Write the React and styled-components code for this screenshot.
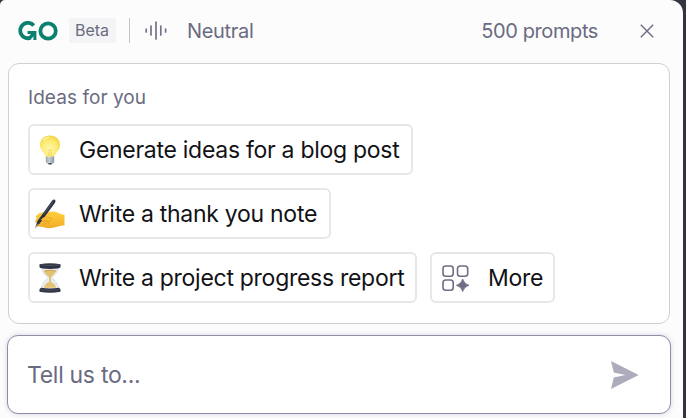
import React from "react";
import styled, { createGlobalStyle } from "styled-components";

const GlobalStyle = createGlobalStyle`
  * { box-sizing: border-box; }
  body { margin: 0; overflow: hidden; background: #30353e; font-family: Inter, "Liberation Sans", sans-serif; }
  svg { display: block; flex: none; }
`;

const Panel = styled.main`
  width: 683px;
  height: 418px;
  padding: 0 12px 0 8px;
  border-radius: 5px 13px 0 0;
  background: #fcfcfd;
  color: #6a6b81;
`;

const Header = styled.header`
  display: flex;
  align-items: center;
  height: 63px;
  padding: 0 17px 2px 10px;
`;

const Badge = styled.span`
  width: 47px;
  height: 25px;
  margin-left: 11px;
  padding-right: 1px;
  border-radius: 2px;
  background: #f4f4f6;
  text-align: center;
  font-size: 16px;
  line-height: 25px;
`;

const Divider = styled.span`
  width: 1px;
  height: 25px;
  margin: 0 15px 0 13px;
  background: #c3c3cb;
`;

const HeaderText = styled.span`
  font-size: 20px;
  line-height: 26px;
  white-space: nowrap;
  letter-spacing: ${(p) => (p.$end ? "-0.4px" : "-0.32px")};
  margin-left: ${(p) => (p.$end ? "auto" : "20px")};
`;

const CloseButton = styled.button`
  display: flex;
  margin: 0 0 0 42px;
  padding: 0;
  border: 0;
  background: none;
  color: inherit;
`;

const IdeasCard = styled.section`
  width: 662px;
  height: 261px;
  padding: 20px 19px;
  border: 1px solid #d0d0d5;
  border-radius: 11px;
  background: #fff;
`;

const Title = styled.h2`
  margin: 0 0 14px;
  height: 26px;
  font-size: 19px;
  line-height: 27px;
  font-weight: 400;
  letter-spacing: 0.06px;
`;

const Ideas = styled.div`
  display: flex;
  flex-wrap: wrap;
  gap: 13px;
`;

const Idea = styled.button`
  display: flex;
  align-items: center;
  width: ${(p) => p.$width}px;
  height: 51px;
  padding: 0 0 0 ${(p) => p.$inset || 5}px;
  border: 2px solid #e7e7ea;
  border-radius: 6px;
  background: #fff;
  color: #121216;
  font-family: inherit;
  font-size: 23px;
  letter-spacing: -0.28px;
  white-space: nowrap;
`;

const IconSlot = styled.span`
  width: ${(p) => p.$width || 44}px;
  flex: none;
`;

const Composer = styled.section`
  display: flex;
  align-items: center;
  justify-content: space-between;
  width: 664px;
  height: 79px;
  margin: 11px 0 0 -1px;
  padding: 0 31px 0 19px;
  border: 1px solid #8f8ea5;
  border-radius: 11px;
  background: #fff;
  box-shadow: 0 0 5px rgba(101, 96, 150, 0.28);
`;

const Placeholder = styled.span`
  font-size: 23px;
  line-height: 30px;
  letter-spacing: -0.3px;
`;

const Logo = () => (
  <svg width="40" height="20" viewBox="0 0 40 20" fill="none" stroke="#0b806f" strokeWidth="3.8">
    <path d="M15.800 4.500A7.700 7.700 0 1 0 12.700 16.700" />
    <path d="M9.600 11.500H16.900V19" strokeWidth="3" />
    <path d="M11.500 17L16.500 12" strokeWidth="3.400" />
    <circle cx="30.100" cy="10" r="7.700" />
  </svg>
);

const Voice = () => (
  <svg width="22" height="19" viewBox="0 0 22 19" stroke="#727288" strokeWidth="1.700" strokeLinecap="round">
    <path d="M1.200 8v3M6 5v9M11 1v17M15.800 5v9M20.600 8v3" />
  </svg>
);

const Close = () => (
  <svg width="14" height="14" viewBox="0 0 14 14" stroke="currentColor" strokeWidth="1.400">
    <path d="M.8.8l12.400 12.400M13.200.8L.8 13.200" />
  </svg>
);

const Bulb = () => (
  <svg width="30" height="32" viewBox="0 0 30 32">
    <defs>
      <radialGradient id="glow" cx=".46" cy=".62" r=".62">
        <stop stopColor="#fff6ae" />
        <stop offset=".6" stopColor="#fdec72" />
        <stop offset="1" stopColor="#f5d548" />
      </radialGradient>
      <linearGradient id="cap"><stop stopColor="#9da6ab" /><stop offset=".4" stopColor="#d5dde1" /><stop offset="1" stopColor="#8b969e" /></linearGradient>
    </defs>
    <path d="M15 1.500C8.600 1.500 5 5.800 5 11c0 6 5 7.400 5.700 12h8.600C20 18.400 25 17 25 11 25 5.800 21.400 1.500 15 1.500Z" fill="url(#glow)" />
    <path d="M13 16.700l1.200-1 .8 1.200.8-1.200 1.200 1M14 17.500l-.3 5M16 17.500l.3 5" fill="none" stroke="#e5c44d" strokeWidth=".6" />
    <path d="M10.800 22.500h8.400v5.200c0 1.200-1.800 1.800-2.400 2.800h-3.600c-.6-1-2.400-1.600-2.400-2.800Z" fill="url(#cap)" />
    <path d="M11 24.800h8M11 27.100h8" stroke="#9aa3aa" strokeWidth=".6" />
    <path d="M13 29h4l-.8 1.500h-2.400Z" fill="#424b53" />
    <path d="M9 5.800c1.200-1.700 2.800-2.300 4.700-2.300" stroke="#fff9c5" strokeWidth="1.200" strokeLinecap="round" fill="none" />
  </svg>
);

const WritingHand = () => (
  <svg width="31" height="32" viewBox="1.500 .5 31 32">
    <defs><linearGradient id="skin" x1="0" y1="0" x2="0" y2="1"><stop stopColor="#ffcf3e" /><stop offset="1" stopColor="#f1ad26" /></linearGradient></defs>
    <path d="M2 20c1.200-3.300 4.900-5.400 9-5.500l10-.5c2.500.2 4.800 2.800 10 3.200V28c-5.800-.2-8.700 2.600-15 2.500-2.700.1-4 .1-6.200-1L4.500 29c-1.600-.3-1.500-2.300-.7-3.100C.8 25.700 1.600 21.500 4 20.500Z" fill="url(#skin)" />
    <path d="M12 19.500l5 .8c2.300 1 1 3.100-1 3.100H10.500M9.500 24h4.800c2 .5 1.400 2.300-.3 2.500l-4.700.2" fill="none" stroke="#e29b2a" strokeWidth=".6" />
    <path d="M1.500 31L4 23.500 18.300 3.500q2.300-2.300 3.500-.8.800 1.300-.8 3.300L7 25Z" fill="#2d3243" />
    <path d="M10.500 16.500L19.800 4" stroke="#59627a" strokeWidth=".8" />
    <path d="M1.500 31L4.800 26.500" stroke="#c3c9cc" strokeWidth=".8" />
    <path d="M7 22.500q3.500-4 6.500-3.200c2 .8.3 2.400-1.800 3.200Z" fill="#f9b92b" />
  </svg>
);

const Hourglass = () => (
  <svg width="30" height="32" viewBox="0 .5 30 32">
    <path d="M6.500 4h17c.2 6-2.300 8.400-6.200 11.700v1.100c4.200 3 6.200 5.800 6.200 11.200h-17c0-5.400 2-8.200 6.200-11.200v-1.100C8.800 12.400 6.300 10 6.500 4Z" fill="#e7ecef" stroke="#d0d7dd" strokeWidth=".6" />
    <path d="M8.700 9c4 .5 8.600.7 12.700-.2-1 3.200-3.300 4.700-5.400 6.700v5c2.600 1 4.400 2.700 5.200 5.700H8.900c.7-3 2.500-4.700 5.200-5.700v-5C11.300 13.300 9.600 11.800 8.700 9Z" fill="#e5c270" />
    <path d="M9.500 9.500q5.500-1.500 11 0" stroke="#c99d49" strokeWidth="1" fill="none" />
    <path d="M4.500 2.700Q15 .7 25.500 2.700v3q-1 1.700-10.500 1.700T4.500 5.700ZM6 26.300q9 1.400 18 0l1.500 1.500v2.400Q15 32.500 4.500 30.200v-2.400Z" fill="#303342" />
    <path d="M6 3.400q9 1.300 18 0M6 28.200q9 1.300 18 0" stroke="#555969" strokeWidth=".7" fill="none" />
  </svg>
);

const MoreIcon = () => (
  <svg width="29" height="28" viewBox=".5 -.5 29 28" fill="none" stroke="#6e6d83" strokeWidth="1.600">
    <rect x="1.500" y="1.500" width="10.200" height="10.200" rx="2.700" />
    <rect x="16" y="1.500" width="10.200" height="10.200" rx="2.700" />
    <rect x="1.500" y="15.500" width="10.200" height="10.200" rx="2.700" />
    <path d="M21.200 14.500q1.300 5 6.300 6.300-5 1.300-6.300 6.200-1.300-4.900-6.300-6.200 5-1.300 6.300-6.300Z" fill="#6e6d83" strokeWidth=".8" strokeLinejoin="round" />
  </svg>
);

const Send = () => (
  <svg width="29" height="28" viewBox="0 0 29 28" fill="#acacbc">
    <path d="M1 0L28.700 14 1 28l2.800-11.500L15.500 14 3.800 11.500Z" />
  </svg>
);

export default function App() {
  return (
    <>
      <GlobalStyle />
      <Panel>
        <Header>
          <Logo />
          <Badge>Beta</Badge>
          <Divider />
          <Voice />
          <HeaderText>Neutral</HeaderText>
          <HeaderText $end>500 prompts</HeaderText>
          <CloseButton aria-label="Close"><Close /></CloseButton>
        </Header>
        <IdeasCard>
          <Title>Ideas for you</Title>
          <Ideas>
            <Idea $width={385}><IconSlot><Bulb /></IconSlot>Generate ideas for a blog post</Idea>
            <Idea $width={303}><IconSlot><WritingHand /></IconSlot>Write a thank you note</Idea>
            <Idea $width={389}><IconSlot><Hourglass /></IconSlot>Write a project progress report</Idea>
            <Idea $width={125} $inset={10}><IconSlot $width={46}><MoreIcon /></IconSlot>More</Idea>
          </Ideas>
        </IdeasCard>
        <Composer>
          <Placeholder>Tell us to...</Placeholder>
          <Send />
        </Composer>
      </Panel>
    </>
  );
}
